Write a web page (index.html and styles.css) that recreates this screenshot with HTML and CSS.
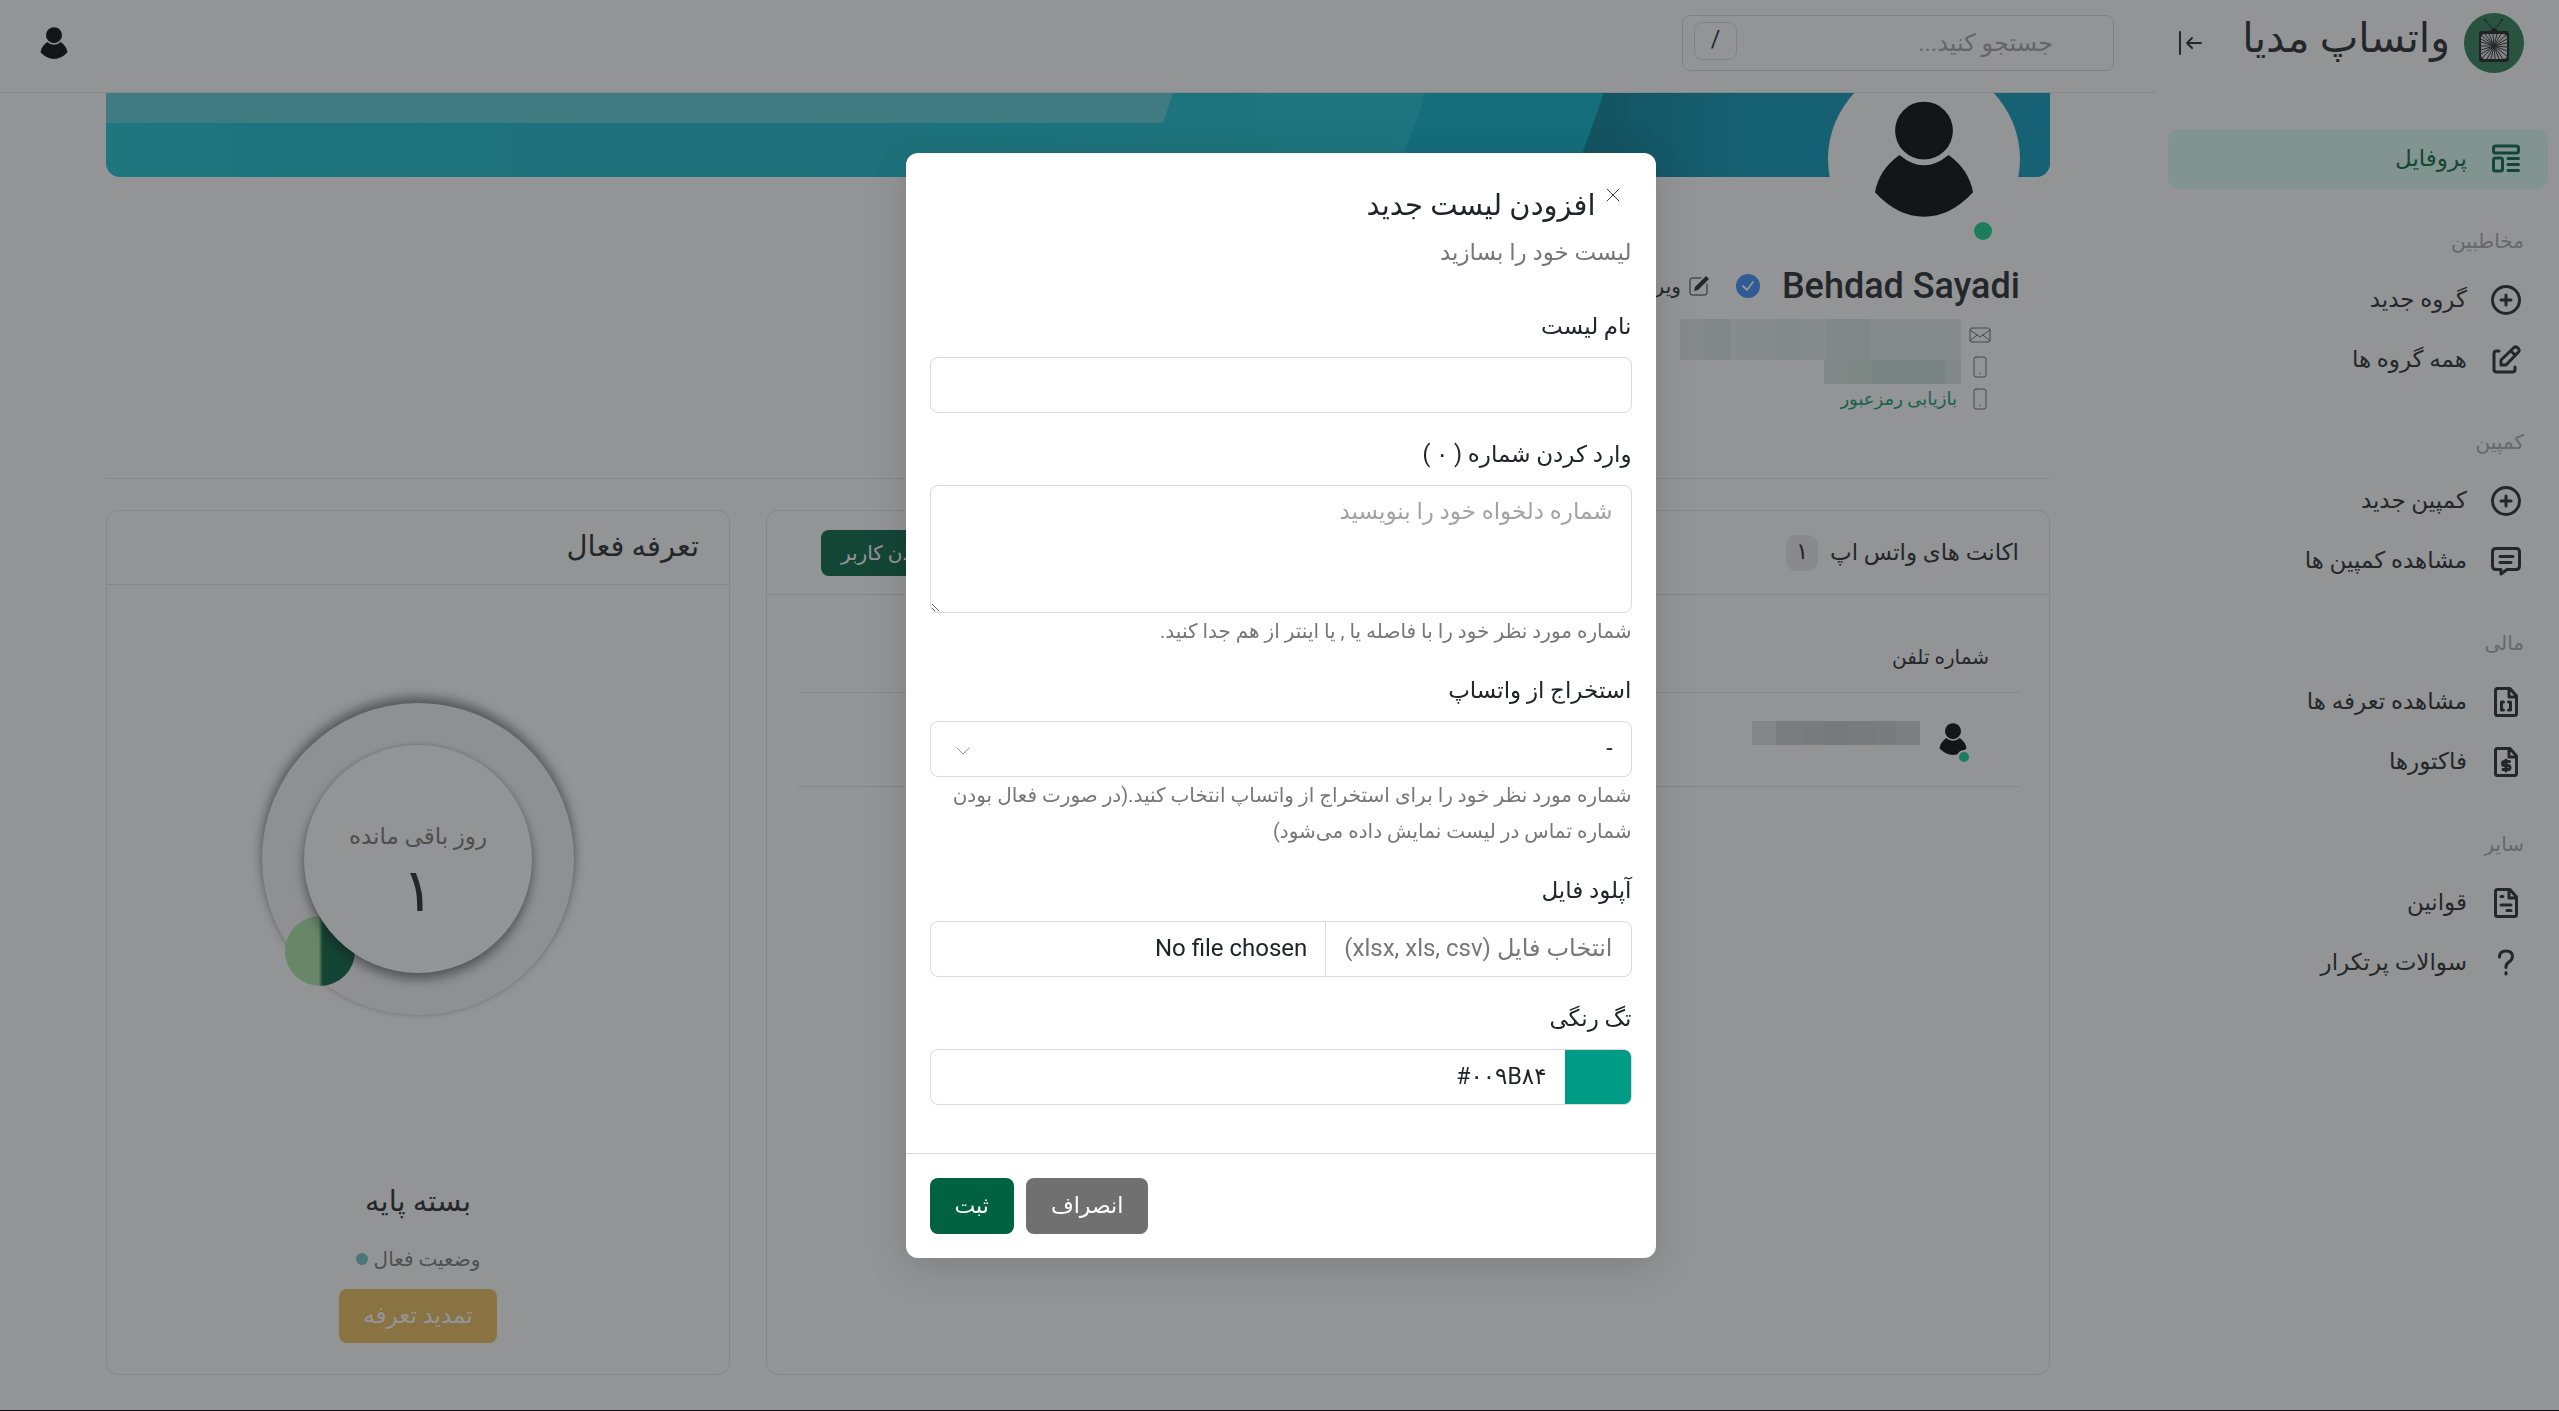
FILE: index.html
```html
<!DOCTYPE html>
<html lang="fa" dir="rtl">
<head>
  <meta charset="UTF-8">
  <meta name="viewport" content="width=device-width, initial-scale=1.0">
  <title>واتساپ مدیا</title>
  <link rel="stylesheet" href="styles.css">
</head>
<body>
  <!-- shared icons -->
  <svg class="sprite" aria-hidden="true">
    <symbol id="person" viewBox="0 0 100 118">
      <circle cx="50" cy="30" r="29.5"/>
      <path d="M25 55 Q50 76 75 55 Q96 70 100 93 Q77 118 50 118 Q23 118 0 93 Q4 70 25 55Z"/>
    </symbol>
    <symbol id="plus" viewBox="0 0 30 30">
      <circle cx="15" cy="15" r="13.5"/><path d="M15 10v10M10 15h10"/>
    </symbol>
    <symbol id="phone" viewBox="0 0 14 22">
      <rect x="1" y="1" width="12" height="20" rx="2"/><path d="M7 17v1"/>
    </symbol>
  </svg>

  <div class="app">
    <aside class="sidebar">
      <div class="brand">
        <svg class="brand-logo" viewBox="0 0 60 60">
          <circle cx="30" cy="30" r="30" fill="#2a7d56"/>
          <path d="M21 7l9 10 8-10" fill="none" stroke="#111" stroke-width="1"/>
          <circle cx="21" cy="7" r="1" fill="#111"/><circle cx="38" cy="7" r="1" fill="#111"/>
          <path d="M26 18q4-5 8 0z" fill="#111"/>
          <rect x="15" y="18" width="30" height="31" rx="3" fill="#1a1a1a"/>
          <rect x="17" y="21" width="26" height="25" rx="4" fill="#ddd"/>
          <path d="M30 33L17 22M30 33L21 21M30 33L25 21M30 33L29 21M30 33L33 21M30 33L37 21M30 33L42 22M30 33L43 26M30 33L43 30M30 33L43 34M30 33L43 38M30 33L43 43M30 33L39 46M30 33L35 46M30 33L31 46M30 33L27 46M30 33L23 46M30 33L18 45M30 33L17 41M30 33L17 37M30 33L17 33M30 33L17 29M30 33L17 26" stroke="#222" stroke-width="1"/>
        </svg>
        <span class="brand-name">واتساپ مدیا</span>
        <button class="collapse" type="button" aria-label="بستن منو">
          <svg viewBox="0 0 24 24"><path d="M2 1v22M23 12H9M14 7l-5 5 5 5"/></svg>
        </button>
      </div>

      <nav class="menu">
        <a class="menu-item active" href="#">
          <svg viewBox="0 0 30 30"><rect x="2.500" y="2" width="25" height="7" rx="2"/><rect x="2.500" y="14" width="9" height="13" rx="2"/><path d="M17 14.500h10.500M17 20.500h10.500M17 26.500h10.500"/></svg>
          پروفایل
        </a>
        <h2 class="menu-title">مخاطبین</h2>
        <a class="menu-item" href="#"><svg><use href="#plus"/></svg>گروه جدید</a>
        <a class="menu-item" href="#">
          <svg viewBox="0 0 30 30"><path d="M8 6H5.500Q3 6 3 8.500v16Q3 27 5.500 27h16q2.500 0 2.500-2.500V22"/><path d="M10 20v-5L23 2.500q2-1.500 4 .5t.5 4L15 20zM20 6l4 4"/></svg>
          همه گروه ها
        </a>
        <h2 class="menu-title">کمپین</h2>
        <a class="menu-item" href="#"><svg><use href="#plus"/></svg>کمپین جدید</a>
        <a class="menu-item" href="#">
          <svg viewBox="0 0 30 30"><path d="M5 2.500h20q3.500 0 3.500 3.500v14q0 3.500-3.500 3.500h-9L10 28v-4.500H5q-3.500 0-3.500-3.500V6q0-3.500 3.500-3.500zM9 10.500h13M9 16.500h11"/></svg>
          مشاهده کمپین ها
        </a>
        <h2 class="menu-title">مالی</h2>
        <a class="menu-item" href="#">
          <svg viewBox="0 0 30 30"><path d="M19 1.500H6.500q-2 0-2 2v23q0 2 2 2h17q2 0 2-2V9zM18 2v8h7M12.500 15h-2v8h2M17.500 15h2v8h-2"/></svg>
          مشاهده تعرفه ها
        </a>
        <a class="menu-item" href="#">
          <svg viewBox="0 0 30 30"><path d="M19 1.500H6.500q-2 0-2 2v23q0 2 2 2h17q2 0 2-2V9zM18 2v8h7M18.500 14.500h-5q-2 0-2 2t2 2h3.500q2 0 2 2t-2 2h-5M15 13v11"/></svg>
          فاکتورها
        </a>
        <h2 class="menu-title">سایر</h2>
        <a class="menu-item" href="#">
          <svg viewBox="0 0 30 30"><path d="M19 1.500H6.500q-2 0-2 2v23q0 2 2 2h17q2 0 2-2V9zM18 2v8h7M10 8.500h2M10 17h10M16 22.500h4"/></svg>
          قوانین
        </a>
        <a class="menu-item" href="#">
          <svg viewBox="0 0 30 30"><path d="M8.500 9q0-6 6.500-6t6.500 5.500q0 3-3.500 5.500t-3 5.500M15 24.500v1.500"/></svg>
          سوالات پرتکرار
        </a>
      </nav>
    </aside>

    <div class="content">
      <header class="topbar">
        <form class="search">
          <input type="search" placeholder="جستجو کنید..." aria-label="جستجو">
          <kbd>/</kbd>
        </form>
        <a class="user" href="#" aria-label="حساب کاربری"><svg><use href="#person"/></svg></a>
      </header>

      <main class="page">
        <div class="cover">
          <svg class="cover-art" viewBox="0 0 1944 84" preserveAspectRatio="none">
            <defs>
              <linearGradient id="sea">
                <stop offset="0" stop-color="#14c2d2"/><stop offset=".3" stop-color="#14b6ca"/><stop offset=".55" stop-color="#14bed0"/><stop offset="1" stop-color="#14c8e0"/>
              </linearGradient>
              <linearGradient id="deep">
                <stop offset="0" stop-color="#007a92"/><stop offset=".35" stop-color="#0296b8"/><stop offset="1" stop-color="#049abc"/>
              </linearGradient>
            </defs>
            <rect width="1944" height="84" fill="url(#sea)"/>
            <path d="M0 0h1067l-10 30H0z" fill="#5accd8"/>
            <path d="M1320 0h190l-30 84h-190z" fill="#02b2cc"/>
            <path d="M1498 0h446v84h-476z" fill="url(#deep)"/>
          </svg>
          <div class="avatar"><svg><use href="#person"/></svg><span class="online"></span></div>
        </div>

        <section class="profile">
          <div class="profile-name">
            <h1>Behdad Sayadi</h1>
            <svg class="verified" viewBox="0 0 24 24"><circle cx="12" cy="12" r="12"/><path d="M7 12l4 4 6-8"/></svg>
            <a class="edit" href="#">
              <svg viewBox="0 0 20 20"><path d="M12 2H3Q1 2 1 4v13q0 2 2 2h13q2 0 2-2V8"/><path class="pen" d="M5 15l1-4L17 0l3 3L9 14z"/></svg>
              ویرایش
            </a>
          </div>
          <ul class="contacts">
            <li>
              <svg viewBox="0 0 22 16"><rect x="1" y="1" width="20" height="14" rx="2"/><path d="M1 3l10 7 10-7M1 14l7-6M21 14l-7-6"/></svg>
              <span class="masked masked-mail"></span>
            </li>
            <li><svg><use href="#phone"/></svg><span class="masked masked-phone"></span></li>
            <li><svg><use href="#phone"/></svg><a href="#">بازیابی رمزعبور</a></li>
          </ul>
        </section>

        <div class="cards">
          <section class="card accounts">
            <div class="card-head">
              <h3>اکانت های واتس اپ</h3>
              <span class="count">۱</span>
              <button class="add-user" type="button">افزودن کاربر</button>
            </div>
            <table>
              <thead><tr><th>شماره تلفن</th></tr></thead>
              <tbody>
                <tr>
                  <td>
                    <div class="account">
                      <span class="account-avatar"><svg><use href="#person"/></svg></span>
                      <span class="masked masked-number"></span>
                    </div>
                  </td>
                </tr>
              </tbody>
            </table>
          </section>

          <section class="card tariff">
            <div class="card-head"><h2>تعرفه فعال</h2></div>
            <div class="tariff-body">
              <div class="dial">
                <svg class="dial-progress" viewBox="0 0 312 312">
                  <defs>
                    <linearGradient id="leaf"><stop offset=".48" stop-color="#aae4a4"/><stop offset=".54" stop-color="#005f3c"/></linearGradient>
                  </defs>
                  <circle cx="58" cy="248" r="35" fill="url(#leaf)"/>
                </svg>
                <div class="dial-inner">
                  <span>روز باقی مانده</span>
                  <strong>۱</strong>
                </div>
              </div>
              <h2>بسته پایه</h2>
              <p class="status">وضعیت فعال <i></i></p>
              <button class="renew" type="button">تمدید تعرفه</button>
            </div>
          </section>
        </div>
      </main>
    </div>
  </div>

  <div class="backdrop">
    <div class="modal" role="dialog" aria-modal="true" aria-labelledby="modal-title">
      <form>
        <div class="modal-head">
          <div class="modal-title">
            <button class="close" type="button" aria-label="بستن"><svg viewBox="0 0 14 14"><path d="M1 1l12 12M13 1L1 13"/></svg></button>
            <h2 id="modal-title">افزودن لیست جدید</h2>
          </div>
          <p>لیست خود را بسازید</p>
        </div>

        <div class="modal-body">
          <div class="field">
            <label for="list-name">نام لیست</label>
            <input class="control" type="text" id="list-name">
          </div>
          <div class="field">
            <label for="numbers">وارد کردن شماره ( ۰ )</label>
            <textarea class="control" id="numbers" placeholder="شماره دلخواه خود را بنویسید"></textarea>
            <small>شماره مورد نظر خود را با فاصله یا , یا اینتر از هم جدا کنید.</small>
          </div>
          <div class="field">
            <label for="account">استخراج از واتساپ</label>
            <div class="select">
              <select class="control" id="account"><option>-</option></select>
              <svg viewBox="0 0 14 8"><path d="M1 1l6 6 6-6"/></svg>
            </div>
            <small>شماره مورد نظر خود را برای استخراج از واتساپ انتخاب کنید.(در صورت فعال بودن شماره تماس در لیست نمایش داده می‌شود)</small>
          </div>
          <div class="field">
            <label for="file">آپلود فایل</label>
            <div class="control group file-group">
              <label class="group-text" for="file">انتخاب فایل (xlsx, xls, csv)</label>
              <input type="file" id="file">
            </div>
          </div>
          <div class="field">
            <label for="color">تگ رنگی</label>
            <div class="control group">
              <input class="swatch" type="color" value="#009b84" aria-label="انتخاب رنگ">
              <input class="color-code" type="text" id="color" dir="ltr" value="#۰۰۹B۸۴">
            </div>
          </div>
        </div>

        <div class="modal-foot">
          <button class="btn btn-cancel" type="button">انصراف</button>
          <button class="btn btn-save" type="submit">ثبت</button>
        </div>
      </form>
    </div>
  </div>
</body>
</html>
```
FILE: styles.css
```css
* {
  box-sizing: border-box;
}
html {
  background: #111;
}
body {
  margin: 0;
  font-family: Roboto, "DejaVu Sans", sans-serif;
  font-size: 23px;
  line-height: 36px;
  color: #212529;
}
h1, h2, h3, p, ul {
  margin: 0;
  padding: 0;
  font-weight: 500;
}
a {
  color: inherit;
  text-decoration: none;
}
button, input, select, textarea {
  font: inherit;
  color: inherit;
}
button {
  border: 0;
  padding: 0;
  background: none;
  cursor: pointer;
}
svg {
  flex: none;
  fill: none;
  stroke: currentColor;
  stroke-linecap: round;
  stroke-linejoin: round;
}
#person {
  fill: #000;
  stroke: none;
}
.sprite {
  position: absolute;
  width: 0;
  height: 0;
}
.app {
  display: flex;
  min-height: calc(100vh - 1px);
  background: #fff;
}

/* sidebar */
.sidebar {
  flex: none;
  width: 403px;
  padding: 0 11px 0 12px;
}
.brand {
  display: flex;
  align-items: center;
  height: 86px;
  padding: 0 24px 0 10px;
}
.brand-logo {
  width: 60px;
  height: 60px;
  stroke: none;
}
.brand-name {
  margin: 0 14px 10px;
  font-size: 41px;
  white-space: nowrap;
}
.collapse {
  display: flex;
  margin-right: auto;
}
.collapse svg {
  width: 24px;
  height: 24px;
  stroke-width: 2;
}
.menu {
  padding-top: 43px;
}
.menu-item {
  display: flex;
  align-items: center;
  gap: 24px;
  height: 60px;
  padding: 0 27px;
  border-radius: 12px;
}
.menu-item svg {
  width: 30px;
  height: 30px;
  stroke-width: 3;
}
.menu-item.active {
  background: #dcfff5;
  color: #006241;
}
.menu-title {
  padding: 36px 24px 13px;
  font-size: 20px;
  line-height: 32px;
  color: #a4a6a8;
}

/* top bar */
.content {
  flex: 1;
  min-width: 0;
}
.topbar {
  position: relative;
  z-index: 1;
  display: flex;
  align-items: center;
  justify-content: space-between;
  height: 93px;
  padding: 0 42px 6px 40px;
  border-bottom: 1px solid #e2e4e6;
  background: #fff;
}
.search {
  display: flex;
  align-items: center;
  width: 432px;
  height: 56px;
  padding: 0 60px 0 11px;
  border: 1px solid #d8dadc;
  border-radius: 8px;
}
.search input {
  flex: 1;
  min-width: 0;
  padding: 0;
  border: 0;
  outline: 0;
  background: none;
  appearance: none;
  font-size: 24px;
}
::placeholder {
  color: #a3a3a3;
  opacity: 1;
}
.search kbd {
  width: 43px;
  height: 38px;
  margin-bottom: 4px;
  border: 1px solid #d8dadc;
  border-radius: 8px;
  font-family: inherit;
  line-height: 34px;
  text-align: center;
}
.user svg {
  display: block;
  width: 28px;
  height: 32px;
}

/* profile */
.page {
  padding: 0 106px 34px;
}
.cover {
  position: relative;
  height: 84px;
}
.cover-art {
  display: block;
  width: 100%;
  height: 100%;
  border-radius: 0 0 14px 14px;
  stroke: none;
}
.avatar {
  position: absolute;
  right: 30px;
  bottom: -78px;
  display: flex;
  align-items: center;
  justify-content: center;
  width: 192px;
  height: 192px;
  border-radius: 50%;
  background: #fff;
}
.avatar svg {
  width: 98px;
  height: 116px;
}
.online {
  position: absolute;
  right: 28px;
  bottom: 15px;
  width: 18px;
  height: 18px;
  border-radius: 50%;
  background: #10d08c;
}
.profile {
  height: 302px;
  padding: 89px 30px 0;
  border-bottom: 1px solid #e2e4e6;
}
.profile-name {
  display: flex;
  align-items: center;
}
.profile-name h1 {
  font-size: 36px;
  line-height: 40px;
}
.verified {
  width: 24px;
  height: 24px;
  margin: 0 22px 0 27px;
  fill: #388cfb;
  stroke: #fff;
  stroke-width: 2;
}
.verified circle {
  stroke: none;
}
.verified path {
  fill: none;
}
.edit {
  display: flex;
  align-items: center;
  gap: 8px;
  font-size: 20px;
}
.edit svg {
  width: 20px;
  height: 20px;
  stroke-width: 1;
}
.edit .pen {
  fill: currentColor;
  stroke: none;
}
.contacts {
  padding: 13px 29px 0;
  list-style: none;
}
.contacts li {
  display: flex;
  align-items: center;
  gap: 8px;
  height: 32px;
  color: #666;
}
.contacts svg {
  width: 22px;
  height: 22px;
  stroke-width: 1;
}
.contacts a {
  margin-right: 4px;
  color: #0c9a6a;
  font-size: 18px;
}
.masked {
  align-self: stretch;
}
.masked-mail {
  width: 281px;
  height: 41px;
  background: linear-gradient(to left, #e2efeb 0 32%, #d8e9e4 32% 48%, #e3efeb 48% 57%, #dceae6 57% 66%, #e3efeb 66% 82%, #d9e8e3 82% 91%, #e2e9e6 91%);
}
.masked-phone {
  width: 137px;
  height: 24px;
  margin-top: 9px;
  background: linear-gradient(to left, #d8e9e4 0 12%, #c8dfd8 12% 65%, #d0e4dd 65% 83%, #dae9e4 83%);
}

/* cards */
.cards {
  display: flex;
  gap: 36px;
  margin-top: 31px;
}
.card {
  height: 865px;
  border: 1px solid #e2e4e6;
  border-radius: 12px;
}
.accounts {
  flex: 1;
}
.tariff {
  width: 624px;
}
.card-head {
  display: flex;
  align-items: center;
  height: 74px;
  padding: 0 30px;
  border-bottom: 1px solid #e2e4e6;
}
.card-head h2 {
  margin-bottom: 4px;
}
.card-head h2, .tariff-body h2 {
  font-size: 29px;
}
.accounts .card-head {
  height: 84px;
  padding-left: 54px;
}
.card-head h3 {
  font-size: 23px;
}
.count {
  width: 32px;
  height: 36px;
  margin-right: 12px;
  border-radius: 10px;
  background: #e9eaec;
  line-height: 34px;
  text-align: center;
}
.add-user {
  height: 46px;
  margin-right: auto;
  padding: 0 20px;
  border-radius: 8px;
  background: #006241;
  color: #fff;
  font-size: 20px;
}
table {
  width: calc(100% - 62px);
  margin: 24px 30px 0 32px;
  border-collapse: collapse;
}
th, td {
  padding: 0 30px;
  border-bottom: 1px solid #e2e4e6;
  font-size: 20px;
  font-weight: 500;
  text-align: right;
}
th {
  height: 73px;
  padding-top: 4px;
}
td {
  height: 94px;
}
.account {
  display: flex;
  align-items: center;
  gap: 19px;
  padding-right: 22px;
}
.account-avatar {
  position: relative;
  display: flex;
}
.account-avatar svg {
  width: 28px;
  height: 32px;
}
.account-avatar::after {
  content: "";
  position: absolute;
  right: -4px;
  bottom: -9px;
  width: 10px;
  height: 10px;
  border: 2px solid #fff;
  border-radius: 50%;
  background: #10d08c;
}
.masked-number {
  width: 168px;
  height: 24px;
  margin-bottom: 12px;
  align-self: flex-start;
  background: linear-gradient(to left, #d3d4d5 0 14%, #cbccd0 14% 28%, #c8cccf 28% 43%, #c6c7c8 43% 57%, #cccdd0 57% 71%, #cbd0d0 71% 86%, #e2e3e4 86%);
}
.tariff-body {
  display: flex;
  flex-direction: column;
  align-items: center;
  padding-top: 118px;
}
.dial {
  position: relative;
  display: flex;
  align-items: center;
  justify-content: center;
  width: 312px;
  height: 312px;
  margin-bottom: 166px;
  border-radius: 50%;
  background: #f6f7f7;
  box-shadow: 0 -6px 12px rgba(0, 0, 0, 0.5), 0 1px 4px rgba(0, 0, 0, 0.1);
}
.dial-progress {
  position: absolute;
  inset: 0;
  stroke: none;
}
.dial-inner {
  position: relative;
  display: flex;
  flex-direction: column;
  align-items: center;
  width: 228px;
  height: 228px;
  padding-top: 74px;
  border-radius: 50%;
  background: #fff;
  box-shadow: 0 6px 12px rgba(0, 0, 0, 0.5), 0 -1px 4px rgba(0, 0, 0, 0.1);
}
.dial-inner span {
  color: #747474;
}
.dial-inner strong {
  font-size: 60px;
  font-weight: 400;
  line-height: 72px;
}
.tariff-body h2 {
  line-height: 40px;
}
.status {
  display: flex;
  align-items: center;
  gap: 6px;
  margin: 20px 0 12px;
  font-size: 20px;
  color: #777;
}
.status i {
  width: 12px;
  height: 12px;
  border-radius: 50%;
  background: #6cc0c6;
}
.renew {
  height: 54px;
  padding: 0 24px;
  border-radius: 8px;
  background: #eabc58;
  color: #fff;
}

/* modal */
.backdrop {
  position: fixed;
  inset: 0 0 1px;
  display: flex;
  align-items: center;
  justify-content: center;
  padding-left: 2px;
  background: rgba(39, 41, 43, 0.5);
  z-index: 10;
}
.modal {
  width: 750px;
  border-radius: 12px;
  background: #fff;
  box-shadow: 0 8px 40px rgba(0, 0, 0, 0.15);
}
.modal-head {
  padding: 24px 24px 38px;
}
.modal-title {
  display: flex;
  gap: 10px;
  padding-right: 12px;
}
.modal-title h2 {
  font-size: 29px;
  line-height: 56px;
}
.close {
  align-self: flex-start;
  display: flex;
  padding: 11px 0;
  color: #444;
}
.close svg {
  width: 14px;
  height: 14px;
  stroke-width: 1;
}
.modal-head p {
  margin-top: 2px;
  color: #777;
  font-weight: 400;
}
.modal-body {
  display: flex;
  flex-direction: column;
  gap: 24px;
  padding: 0 24px 48px;
}
.field {
  display: flex;
  flex-direction: column;
}
.field > label {
  margin-bottom: 12px;
}
.field small {
  font-size: 20px;
  color: #777;
}
.control {
  width: 100%;
  height: 56px;
  padding: 0 18px;
  border: 1px solid #d9d9d9;
  border-radius: 8px;
  background: #fff;
}
textarea.control {
  display: block;
  height: 128px;
  padding: 8px 18px;
}
.select {
  position: relative;
}
.select select {
  appearance: none;
}
.select svg {
  position: absolute;
  left: 26px;
  top: 26px;
  width: 14px;
  height: 8px;
  color: #999;
  stroke-width: 1;
}
.group {
  display: flex;
  padding: 0;
  overflow: hidden;
}
.file-group {
  font-size: 24px;
}
.group-text {
  padding: 0 18px;
  border-left: 1px solid #d9d9d9;
  line-height: 52px;
  color: #777;
  white-space: nowrap;
}
.group input {
  flex: 1;
  min-width: 0;
  padding: 0 18px;
  border: 0;
  background: none;
  line-height: 52px;
}
.group input::file-selector-button {
  display: none;
}
.group .swatch {
  flex: none;
  width: 66px;
  height: 54px;
  padding: 0;
}
.swatch::-webkit-color-swatch-wrapper {
  height: 54px;
  padding: 0;
}
.swatch::-webkit-color-swatch {
  height: 54px;
  border: 0;
  border-radius: 0;
}
.color-code {
  text-align: right;
}
.modal-foot {
  display: flex;
  justify-content: flex-end;
  gap: 12px;
  padding: 24px;
  border-top: 1px solid #d9d9d9;
}
.btn {
  height: 56px;
  padding: 0 25px;
  border-radius: 8px;
  background: #707070;
  color: #fff;
  font-size: 22px;
}
.btn-save {
  background: #006241;
}
```
